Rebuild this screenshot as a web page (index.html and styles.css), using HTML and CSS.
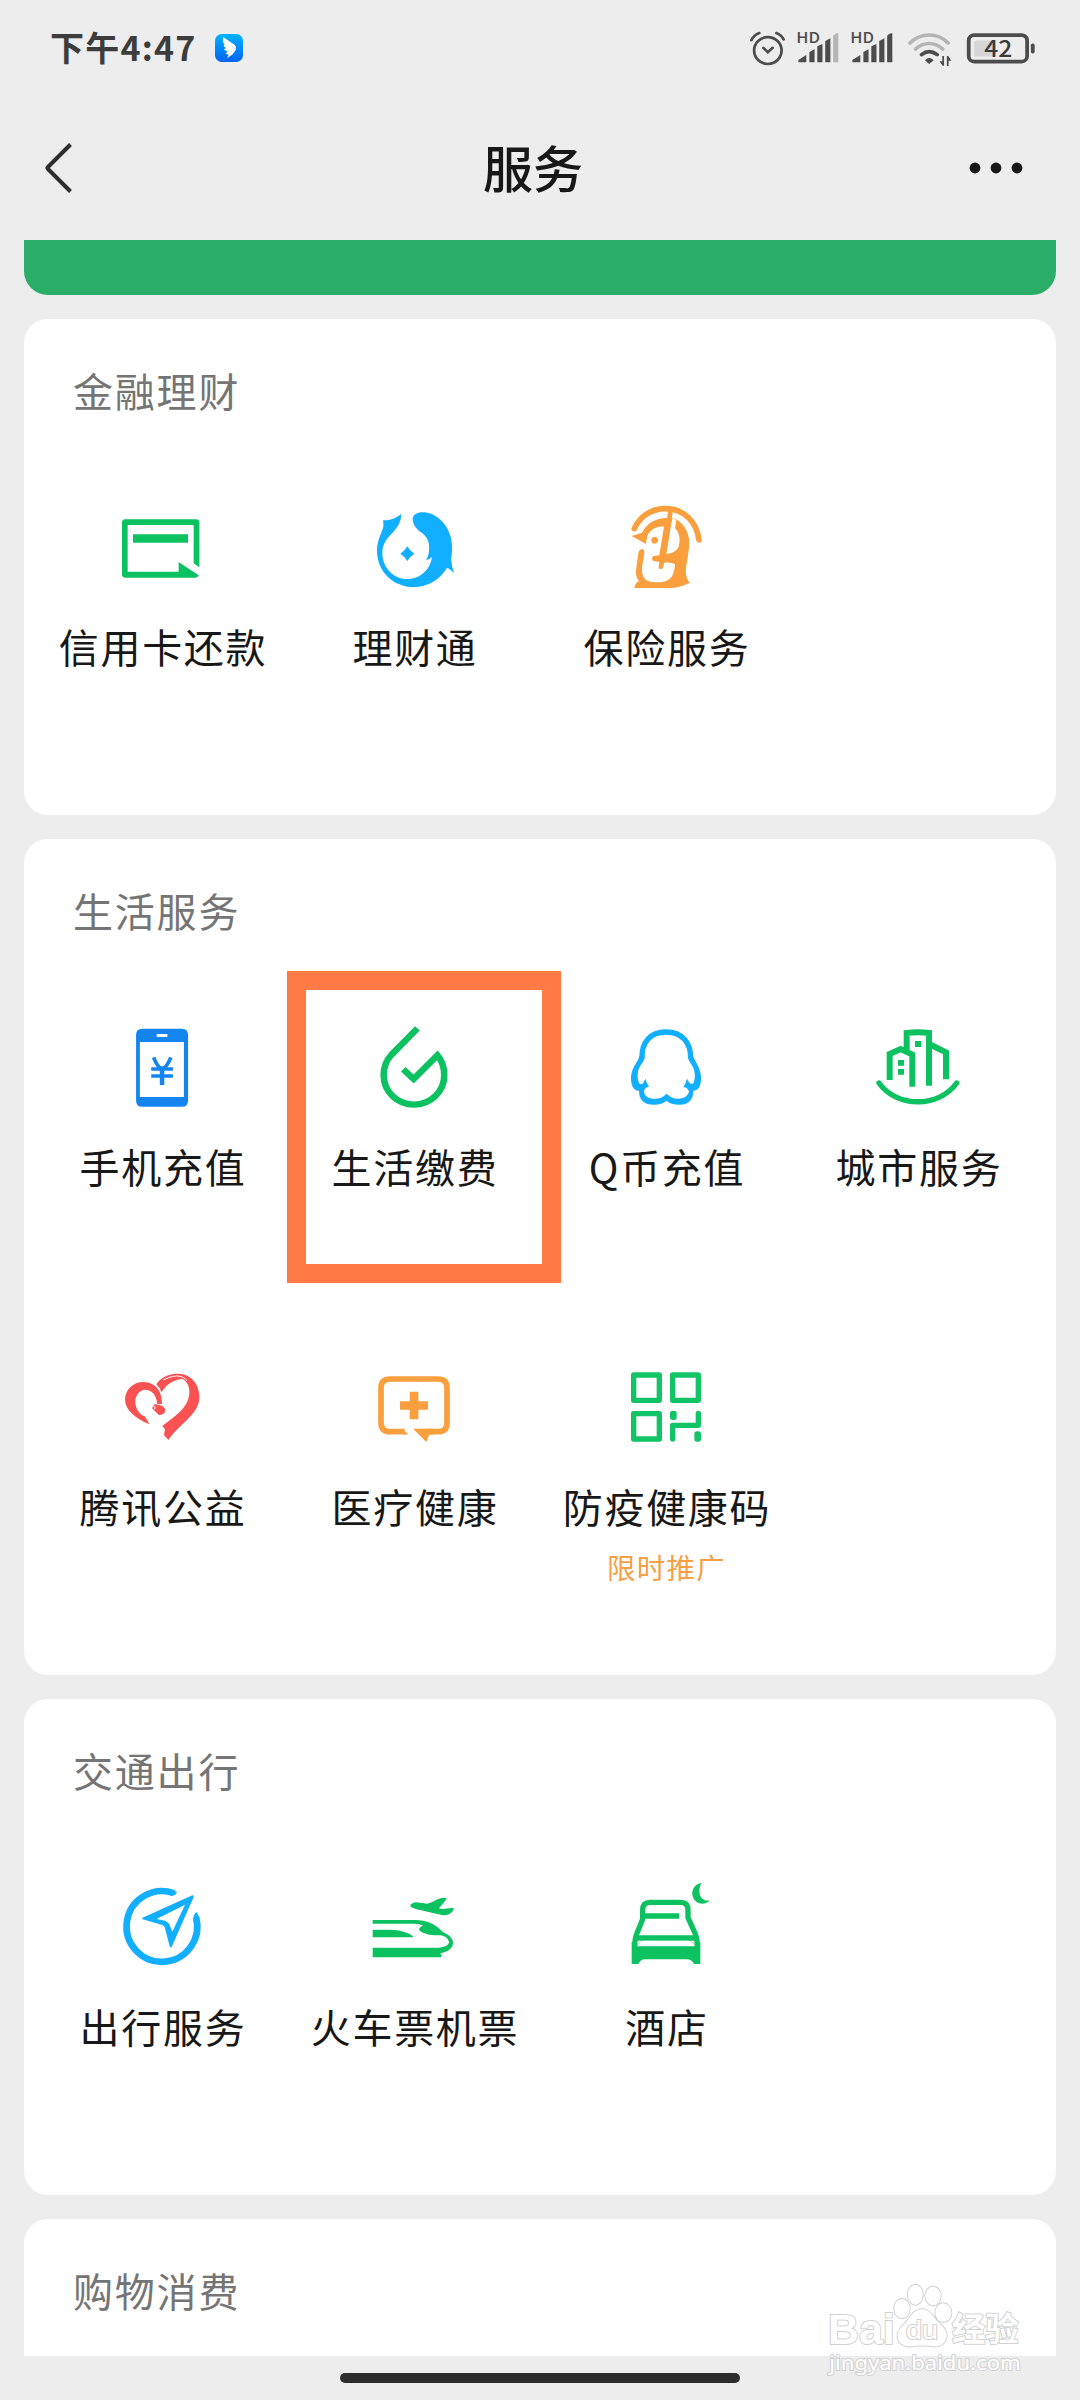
FILE: index.html
```html
<!DOCTYPE html>
<html lang="zh-CN">
<head>
<meta charset="utf-8">
<title>服务</title>
<link rel="stylesheet" href="styles.css">
</head>
<body>
<div class="screen">
  <header class="status">
    <span class="clock">下午4:47</span>
    <svg class="app-badge" viewBox="624 102 82 84" preserveAspectRatio="none">
      <defs><linearGradient id="sky" x1="0" y1="0" x2="0" y2="1"><stop offset="0" stop-color="#00b4ff"/><stop offset="1" stop-color="#0062f5"/></linearGradient></defs>
      <rect x="624" y="102" width="82" height="84" rx="20" fill="url(#sky)"/>
      <path fill="#fff" d="M648 111L682 135Q687 140 685 149L676 163L659 175L664 164L655 161L661 154L650 149L656 144L649 138L652 134L647 125Z"/>
    </svg>
    <div class="indicators">
      <svg class="alarm" viewBox="610 92 102 104" preserveAspectRatio="none" fill="none" stroke="#4c4c4c" stroke-width="8" stroke-linecap="round">
        <circle cx="662" cy="150" r="40"/><path d="M649 142L662 155L676 142M614 119Q622 104 637 98M687 98Q701 103 708 117"/>
      </svg>
      <svg class="signal" viewBox="748 92 122 96" preserveAspectRatio="none" fill="#4c4c4c">
        <text x="746" y="129" class="hd" textLength="69" lengthAdjust="spacingAndGlyphs">HD</text>
        <path d="M752 186V179L775 164V186ZM784 186V155L799 147V186ZM807 186V138L822 131V186ZM830 186V122L845 114V186Z"/><path fill="#b5b5b5" d="M853 186V106Q860 98 868 99V186Z"/>
      </svg>
      <svg class="signal" viewBox="748 92 122 96" preserveAspectRatio="none" fill="#4c4c4c">
        <text x="746" y="129" class="hd" textLength="69" lengthAdjust="spacingAndGlyphs">HD</text>
        <path d="M752 186V179L775 164V186ZM784 186V155L799 147V186ZM807 186V138L822 131V186ZM830 186V122L845 114V186ZM853 186V106Q860 98 868 99V186Z"/>
      </svg>
      <svg class="wifi" viewBox="1071 96 124 102" preserveAspectRatio="none" fill="none" stroke-width="11" stroke-linecap="round">
        <path stroke="#b5b5b5" d="M1077 129C1108 97 1156 97 1187 129M1093 147C1116 125 1148 125 1171 147"/><path stroke="#4c4c4c" d="M1110 164Q1132 146 1155 164"/>
        <path fill="#4c4c4c" d="M1120 181Q1132 167 1145 181L1132 192ZM1162 184H1170V168H1175V197H1171ZM1183 168H1187L1196 182H1188V198H1183Z"/>
      </svg>
      <svg class="battery" viewBox="1240 98 198 92" preserveAspectRatio="none">
        <rect x="1245" y="104" width="170" height="79" rx="16" fill="none" stroke="#4c4c4c" stroke-width="11"/>
        <rect x="1260" y="120" width="62" height="48" rx="8" fill="#d6d6d6"/>
        <rect x="1426" y="129" width="11" height="30" rx="5" fill="#4c4c4c"/>
        <text x="1290" y="170" class="level" textLength="82" lengthAdjust="spacingAndGlyphs">42</text>
      </svg>
    </div>
  </header>

  <nav class="nav">
    <svg class="back" viewBox="0 0 32 56" fill="none" stroke="#2e2e2e" stroke-width="4"><path d="M27.500 4.500L5 27Q4 28 5 29L27.500 51.500"/></svg>
    <h1>服务</h1>
    <svg class="more" viewBox="0 0 54 12"><circle cx="6" cy="6" r="5.400"/><circle cx="27" cy="6" r="5.400"/><circle cx="48" cy="6" r="5.400"/></svg>
  </nav>

  <main class="content">
    <div class="banner"></div>

    <section class="card">
      <h2>金融理财</h2>
      <div class="grid">
        <div class="item">
          <svg class="icon green" viewBox="231 69 270 270"><path d="M256 118H468Q478 118 478 128V262L461 250V135H263V275H416V246L476 286Q474 293 466 293H256Q246 293 246 283V128Q246 118 256 118ZM279 163H444V188H279Z"/></svg>
          <span class="label">信用卡还款</span>
        </div>
        <div class="item">
          <svg class="icon sky" viewBox="987 69 270 270"><path d="M1029 121C1052 122 1070 113 1084 101C1083 132 1068 147 1052 164C1034 182 1027 198 1027 221C1028 262 1060 297 1101 297C1142 297 1171 268 1176 231Q1170 238 1158 240Q1170 222 1167 195C1165 178 1158 168 1143 157C1127 145 1118 132 1118 116C1119 103 1133 96 1150 97C1200 100 1238 150 1236 205Q1236 225 1233 235Q1235 260 1242 280Q1230 266 1221 264C1200 298 1165 321 1122 321C1060 321 1011 275 1011 212C1011 180 1025 160 1030 140Q1031 130 1029 121ZM1102 199Q1110 213 1123 221Q1110 229 1102 243Q1094 229 1081 221Q1094 213 1102 199Z"/></svg>
          <span class="label">理财通</span>
        </div>
        <div class="item">
          <svg class="icon orange" viewBox="543 69 270 270">
            <path d="M575 168L606 158C622 128 645 115 682 113H700C725 125 748 150 748 190C746 230 735 262 738 285Q742 302 750 308Q720 323 690 324H583Q584 310 597 303C586 290 587 275 590 255L596 215Q600 206 608 207Q614 210 613 218L606 262C604 290 615 307 645 307C680 308 703 300 705 252Q690 246 672 248L640 243Q632 235 640 228L658 226L672 140C645 138 622 155 620 178L618 192Z"/>
            <path class="cut" d="M699 110L709 122L705 145C719 158 722 180 716 200C708 215 695 220 679 222L694 130Z"/>
            <circle cx="644" cy="181" r="10"/>
            <path class="line" stroke-width="17" d="M583 146C600 108 635 86 676 86C732 86 770 125 777 180"/>
            <path class="line" stroke-width="14" d="M692 92L663 260"/>
          </svg>
          <span class="label">保险服务</span>
        </div>
      </div>
    </section>

    <section class="card">
      <h2>生活服务</h2>
      <div class="grid">
        <div class="item">
          <svg class="icon blue" viewBox="223.600 189 261.400 270" preserveAspectRatio="none">
            <path d="M297 206H412Q430 206 430 224V422Q430 440 412 440H297Q279 440 279 422V224Q279 206 297 206ZM290 246V411H418V246ZM339 222V231H370V222Z"/>
            <path class="line flat" stroke-width="11" d="M330 292Q342 325 355 325Q367 325 380 292M323 327H386M323 348H386"/><path d="M348 322H361V375H348Z"/>
          </svg>
          <span class="label">手机充值</span>
        </div>
        <div class="item">
          <svg class="icon green" viewBox="955.400 189 261.400 270" preserveAspectRatio="none"><path class="line flat" stroke-width="19" d="M1096 205L1020 285C1005 302 998 322 998 345C998 395 1037 434 1086 434C1135 434 1174 395 1174 345C1174 322 1167 302 1154 286L1085 357L1055 328"/></svg>
          <span class="label">生活缴费</span>
          <div class="highlight"></div>
        </div>
        <div class="item">
          <svg class="icon sky" viewBox="183 189 270 270">
            <path class="line flat" stroke-width="16" d="M246 296C244 248 270 216 318 216C366 216 393 248 392 296"/>
            <path d="M238 288L254 290Q253 302 247 309C232 325 230 350 237 368Q241 376 249 370L256 356Q260 370 267 380Q255 382 252 392C252 408 266 416 283 416C300 416 311 410 320 401C329 410 340 416 355 416C372 416 385 408 387 394Q384 384 370 380Q378 370 381 356L388 368Q396 376 401 368C408 350 405 325 391 309Q385 302 384 290L399 288C402 300 422 322 423 352C424 380 414 393 400 392C400 420 385 434 358 434C340 434 328 430 320 423C310 430 298 434 282 434C252 434 237 420 237 392C222 393 213 380 213 352C214 322 236 304 238 288Z"/>
          </svg>
          <span class="label">Q币充值</span>
        </div>
        <div class="item">
          <svg class="icon green" viewBox="939 189 270 270">
            <path class="line flat" stroke-width="18" d="M989 360V282L1022 267L1057 284V380M1040 272V219Q1073 215 1107 219V377M1107 252L1158 277V358"/>
            <path d="M1014 300H1032V317H1014ZM1014 327H1032V344H1014ZM1065 243H1083V261H1065Z"/>
            <path class="line" stroke-width="16" d="M957 369C1010 444 1137 444 1190 369"/>
          </svg>
          <span class="label">城市服务</span>
        </div>
        <div class="item">
          <svg class="icon red" viewBox="171 69 270 270">
            <path d="M268 253C225 235 195 210 195 178C196 148 220 125 252 126C285 128 306 150 306 192L292 193C290 165 275 149 255 149C235 151 225 170 226 188C228 207 237 222 254 229Q262 240 268 253ZM276 205L284 192L306 197Q319 205 315 216Q308 227 296 224Z"/>
            <path d="M289 133C305 108 330 101 355 101C395 102 420 135 418 175C415 225 360 250 325 300L312 285L315 268L307 258C350 225 388 200 388 155C388 135 380 125 368 117C345 118 320 130 305 157Q299 142 289 133Z"/>
            <path d="M310 120Q340 104 361 109Q372 111 381 122" fill="none" stroke="#fff" stroke-width="3"/><path d="M281 199L286 201L283 208" fill="none" stroke="#fff" stroke-width="3"/>
          </svg>
          <span class="label">腾讯公益</span>
        </div>
        <div class="item">
          <svg class="icon orange" viewBox="927 69 270 270">
            <path class="line flat" stroke-width="17" d="M1034 275H990Q963 275 963 248V144Q963 117 990 117H1134Q1161 117 1161 144V248Q1161 275 1134 275H1100"/>
            <path d="M1028 266.500L1045 283.500H1028ZM1059 266.500H1120V283.500H1108L1099 306ZM1049 155H1075V184H1104V209H1075V238H1049V209H1020V184H1049Z"/>
          </svg>
          <span class="label">医疗健康</span>
        </div>
        <div class="item">
          <svg class="icon mint" viewBox="243 69 270 270">
            <path class="line joined" stroke-width="16" d="M281 105H358V181H281ZM398 105H475V181H398ZM281 221H358V297H281ZM398 297V256H475V220"/>
            <rect x="390" y="212" width="20" height="28" rx="8"/><rect x="463" y="274" width="20" height="31" rx="8"/>
          </svg>
          <span class="label">防疫健康码</span>
          <span class="promo">限时推广</span>
        </div>
      </div>
    </section>

    <section class="card">
      <h2>交通出行</h2>
      <div class="grid">
        <div class="item">
          <svg class="icon sky" viewBox="231 69 270 270">
            <path class="line flat" stroke-width="20" d="M401 99.500A106 106 0 1 0 468 172"/><path d="M399 90L411 96L406 104L396 107ZM459 180Q461 160 470 156L479 174Z"/>
            <path d="M306 174L457 106Q462 106 461 111L396 259Q392 266 389 259L374 202Q372 198 367 195L308 178ZM350 177L375 182Q384 186 388 193L397 215L435 134Z"/>
          </svg>
          <span class="label">出行服务</span>
        </div>
        <div class="item">
          <svg class="icon green" viewBox="987 69 270 270">
            <path d="M998 180H1125C1165 180 1190 195 1208 216C1230 225 1240 238 1239 250C1238 265 1225 275 1202 280Q1201 285 1206 288L1202 292H998V263H1195C1215 262 1227 255 1227 246C1224 232 1210 226 1197 226C1175 227 1148 222 1137 210Q1138 199 1150 197Q1140 191 1122 191H998ZM998 209H1050C1085 210 1112 220 1122 232H998Z"/>
            <path d="M1110 138Q1115 127 1130 127L1162 131C1180 126 1195 114 1212 113Q1220 113 1220 117L1197 145C1213 151 1225 141 1242 145C1240 158 1225 167 1208 166L1140 150Q1118 146 1110 138Z"/>
          </svg>
          <span class="label">火车票机票</span>
        </div>
        <div class="item">
          <svg class="icon green" viewBox="183 69 270 270">
            <path class="line flat" stroke-width="16" d="M248 180V150Q248 127 270 127H362Q384 127 384 150V173L406 222Q412 238 412 262M250 168H357M248 178L230 222Q224 238 224 262M228 234H408"/>
            <path d="M215 245H231V260Q235 242 255 242H385Q403 244 405 260V245H421V312H402Q396 298 380 298H256Q240 298 235 312H215ZM231 259H405V262H231Z" fill-rule="nonzero"/>
            <path d="M232 259Q237 242 256 242H381Q400 242 404 259Z" class="cut"/>
            <path d="M424 69C405 72 395 88 397 104C400 125 420 134 436 130Q445 127 449 121C435 124 422 117 419 102C417 88 419 78 424 69Z"/>
          </svg>
          <span class="label">酒店</span>
        </div>
      </div>
    </section>

    <section class="card">
      <h2>购物消费</h2>
    </section>
  </main>

  <footer class="gesture"><div class="pill"></div></footer>

  <svg class="watermark" viewBox="0 0 900 450">
    <g class="mark">
      <text x="144" y="282" class="brand" textLength="200" lengthAdjust="spacingAndGlyphs">Bai</text>
      <ellipse cx="366" cy="176" rx="23" ry="29"/><ellipse cx="406" cy="134" rx="22" ry="30"/><ellipse cx="459" cy="138" rx="23" ry="28"/><ellipse cx="490" cy="188" rx="24" ry="28"/>
      <path d="M426 178C450 178 460 200 472 214C486 228 500 238 500 258C498 280 480 291 460 289Q426 284 394 289C370 291 353 278 353 257C353 236 370 226 382 212C394 198 402 178 426 178Z"/>
      <text x="378" y="268" class="du" textLength="96" lengthAdjust="spacingAndGlyphs">du</text>
      <text x="516" y="274" class="exp" textLength="200" lengthAdjust="spacingAndGlyphs">经验</text>
      <text x="148" y="360" class="url" textLength="574" lengthAdjust="spacingAndGlyphs">jingyan.baidu.com</text>
    </g>
  </svg>
</div>
</body>
</html>
```
FILE: styles.css
```css
* { box-sizing: border-box; margin: 0; padding: 0; }

body {
  background: #ededed;
  font-family: "Noto Sans CJK SC", sans-serif;
}

svg { display: block; flex: none; overflow: visible; }

.screen {
  position: relative;
  display: flex;
  flex-direction: column;
  width: 1080px;
  height: 2400px;
  overflow: hidden;
}

.status {
  display: flex;
  align-items: center;
  height: 96px;
  padding: 0 45px 0 50px;
}

.clock {
  width: 165px;
  margin-bottom: 2px;
  font-size: 34px;
  font-weight: 700;
  line-height: 48px;
  letter-spacing: 1.200px;
  color: #3c3c3c;
  white-space: nowrap;
}

.app-badge { width: 28px; height: 28px; }

.indicators {
  display: flex;
  align-items: center;
  margin-left: auto;
}

.alarm { width: 35px; height: 35px; margin-right: 12px; }
.signal { width: 42px; height: 32px; margin: 0 12px 3px 0; }
.wifi { width: 43px; height: 34px; margin: 2px 16px 0 3px; }
.battery { width: 68px; height: 31px; }

.hd { font: 500 45px "Noto Sans CJK SC", sans-serif; }
.level { font: 500 68px "Noto Sans CJK SC", sans-serif; fill: #3c3c3c; }

.nav {
  display: flex;
  align-items: center;
  justify-content: space-between;
  height: 144px;
  padding: 0 57px 0 43px;
}

.nav h1 {
  margin-bottom: 4px;
  font-size: 50px;
  font-weight: 500;
  line-height: 72px;
  color: #181818;
}

.back { width: 32px; height: 56px; margin-right: 22px; }
.more { width: 54px; height: 12px; fill: #181818; }

.content {
  display: flex;
  flex-direction: column;
  gap: 24px;
  height: 2116px;
  padding: 0 24px;
  overflow: hidden;
}

.banner {
  flex: none;
  height: 55px;
  border-radius: 0 0 24px 24px;
  background: #2aae67;
}

.card {
  flex: none;
  padding: 0 12px;
  border-radius: 24px;
  background: #fff;
}

.card h2 {
  height: 184px;
  padding: 41px 0 0 37px;
  font-size: 40px;
  font-weight: 400;
  line-height: 60px;
  letter-spacing: 1.800px;
  color: #757575;
}

.grid {
  display: grid;
  grid-template-columns: repeat(4, 1fr);
  grid-auto-rows: 312px;
  row-gap: 28px;
}

.item {
  position: relative;
  display: flex;
  flex-direction: column;
  align-items: center;
}

.icon { width: 90px; height: 90px; fill: currentColor; fill-rule: evenodd; }
.line { fill: none; stroke: currentColor; stroke-linecap: round; }
.flat { stroke-linecap: butt; }
.joined { stroke-linejoin: round; }
.cut { fill: #fff; }

.green { color: #0bc160; }
.mint { color: #13c466; }
.sky { color: #12aeff; }
.blue { color: #1485ee; }
.orange { color: #f99f3e; }
.red { color: #fa5252; }

.label {
  margin-top: 23px;
  padding-left: 2px;
  font-size: 40px;
  line-height: 60px;
  letter-spacing: 1.700px;
  color: #181818;
  white-space: nowrap;
}

.promo {
  margin-top: 10px;
  padding-left: 1px;
  font-size: 28.500px;
  line-height: 42px;
  letter-spacing: 1.200px;
  color: #f5a044;
}

.highlight {
  position: absolute;
  left: -1px;
  top: -52px;
  width: 274px;
  height: 312px;
  border: 19px solid #ff7a45;
}

.gesture {
  display: flex;
  justify-content: center;
  height: 44px;
  padding-top: 17px;
}

.pill {
  width: 400px;
  height: 10px;
  border-radius: 5px;
  background: #2d2d2d;
}

.watermark {
  position: absolute;
  right: 0;
  bottom: 0;
  width: 300px;
  height: 150px;
}

.mark {
  fill: #fff;
  stroke: #d2d2d2;
  stroke-width: 6px;
  paint-order: stroke;
}

.brand { font: 700 128px "Liberation Sans", sans-serif; }
.du { font: 400 76px "Liberation Sans", sans-serif; }
.exp { font: 700 98px "Noto Sans CJK SC", sans-serif; }
.url { font: 400 60px "Noto Sans", sans-serif; }
```
